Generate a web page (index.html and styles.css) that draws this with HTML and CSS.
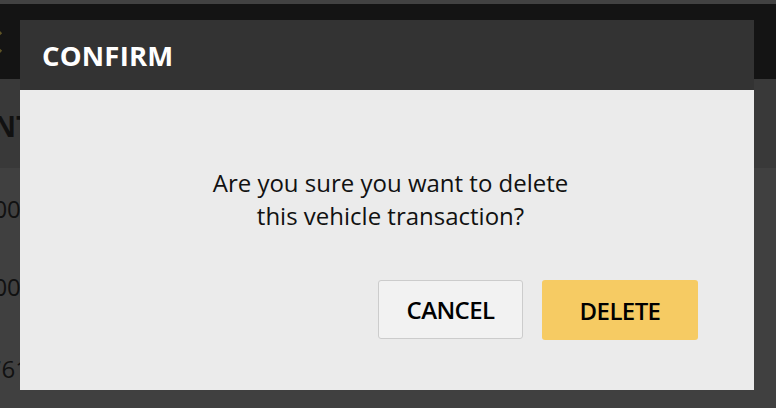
FILE: index.html
```
<!DOCTYPE html>
<html>
<head>
<meta charset="utf-8">
<link rel="stylesheet" href="styles.css">
</head>
<body>
<div class="page">
  <div class="topstrip"></div>
  <div class="appbar">
    <svg class="back" width="16" height="24" viewBox="0 0 16 24"><path d="M13 2 L2 12 L13 22" fill="none" stroke="#5e5426" stroke-width="3.5"/></svg>
  </div>
  <div class="table">
    <div class="thead"><span class="cell head">AMOUNT</span></div>
    <div class="row r1"><span class="cell">$1,500.00</span></div>
    <div class="row r2"><span class="cell">$2,400.00</span></div>
    <div class="row r3"><span class="cell">$761.25</span></div>
  </div>
</div>
<div class="overlay">
  <div class="dialog">
    <div class="dialog-header">CONFIRM</div>
    <div class="dialog-body">
      <p class="message">Are you sure you want to delete<br>this vehicle transaction?</p>
      <div class="actions">
        <button class="btn btn-cancel">CANCEL</button>
        <button class="btn btn-delete">DELETE</button>
      </div>
    </div>
  </div>
</div>
</body>
</html>
```
FILE: styles.css
```
html, body {
  margin: 0;
  padding: 0;
  width: 776px;
  height: 408px;
  overflow: hidden;
  background: #404040;
  font-family: "Open Sans", sans-serif;
}
.page {
  display: flex;
  flex-direction: column;
  height: 408px;
}
.topstrip {
  height: 4px;
  background: #424242;
}
.appbar {
  height: 80px;
  background: #141414;
  display: flex;
  align-items: center;
}
.back {
  margin-left: -12px;
  margin-top: 2px;
}
.table {
  display: flex;
  flex-direction: column;
}
.thead {
  height: 89px;
  background: #393939;
  display: flex;
  align-items: center;
}
.row {
  height: 80px;
  display: flex;
  align-items: center;
}
.cell {
  font-size: 24px;
  color: #111;
  white-space: nowrap;
}
.r1 .cell, .r2 .cell { margin-left: -54px; }
.r2 .cell { margin-top: -3px; }
.r3 .cell { margin-left: -26px; }
.cell.head {
  margin-left: -96px;
  font-weight: 700;
  font-size: 28px;
  margin-top: 4px;
}
.overlay {
  position: absolute;
  left: 0;
  top: 0;
  width: 776px;
  height: 408px;
}
.dialog {
  position: absolute;
  left: 20px;
  top: 20px;
  width: 734px;
  height: 370px;
  display: flex;
  flex-direction: column;
}
.dialog-header {
  height: 70px;
  background: #333333;
  color: #fff;
  font-weight: 700;
  font-size: 27.5px;
  letter-spacing: 0.2px;
  display: flex;
  align-items: center;
  padding-left: 22px;
}
.dialog-body {
  flex: 1;
  background: #ebebeb;
  display: flex;
  flex-direction: column;
  align-items: center;
}
.message {
  margin: 76px 0 0 7px;
  text-align: center;
  font-size: 24px;
  line-height: 33px;
  color: #111;
}
.actions {
  align-self: flex-end;
  display: flex;
  gap: 19px;
  margin: 48px 56px 0 0;
}
.btn {
  font-family: "Open Sans", sans-serif;
  font-weight: 600;
  font-size: 24px;
  letter-spacing: -0.6px;
  color: #000;
  border-radius: 3px;
  cursor: pointer;
  padding: 0;
}
.btn-cancel {
  width: 145px;
  height: 59px;
  background: #f2f2f2;
  border: 1px solid #cccccc;
}
.btn-delete {
  width: 156px;
  height: 60px;
  background: #f6cb63;
  border: none;
}
```
